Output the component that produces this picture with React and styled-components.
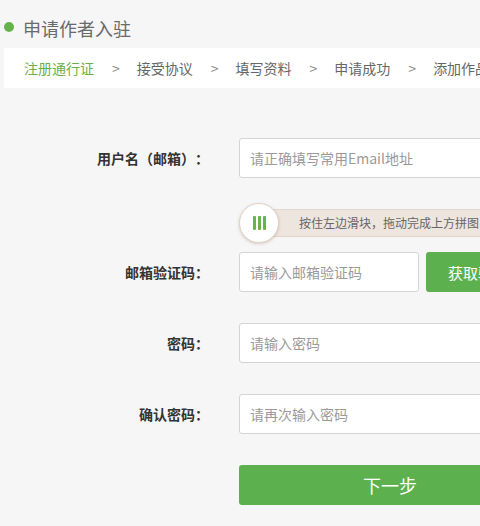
import React from 'react';
import styled, { createGlobalStyle } from 'styled-components';

const GlobalStyle = createGlobalStyle`
  html, body {
    margin: 0;
    padding: 0;
    background: #f6f6f6;
    overflow: hidden;
  }
  body {
    font-family: "Noto Sans CJK SC", "Noto Sans", "Liberation Sans", sans-serif;
    color: #333;
    text-spacing-trim: space-all;
  }
  * { box-sizing: border-box; }
`;

const green = '#5db04e';

const Page = styled.div`
  width: 480px;
  height: 526px;
  overflow: hidden;
  padding-top: 18px;
`;

const Header = styled.h2`
  margin: 0 0 10px 4px;
  display: flex;
  align-items: center;
  gap: 9px;
  height: 20px;
  font-size: 18px;
  line-height: 20px;
  font-weight: normal;
  color: #6a6a6a;
  white-space: nowrap;
`;

const Dot = styled.span`
  width: 10px;
  height: 10px;
  border-radius: 50%;
  background: #67b34b;
  flex-shrink: 0;
  margin-top: -2px;
`;

const Steps = styled.div`
  margin-left: 4px;
  width: 600px;
  height: 40px;
  background: #fff;
  display: flex;
  align-items: center;
  padding-left: 20px;
  font-size: 14px;
  white-space: nowrap;
`;

const Step = styled.span`
  color: ${({ $active }) => ($active ? '#6aaf4c' : '#666')};
`;

const Sep = styled.span`
  color: #888;
  margin: 0 17px 0 18px;
`;

const Form = styled.div`
  margin-top: 50px;
  display: flex;
  flex-direction: column;
`;

const Row = styled.div`
  display: flex;
  align-items: center;
  margin-bottom: ${({ $gap }) => $gap}px;
`;

const Label = styled.label`
  width: 209px;
  flex-shrink: 0;
  margin-right: 30px;
  text-align: right;
  font-size: 14px;
  line-height: 40px;
  font-weight: bold;
  color: #333;
  white-space: nowrap;
  text-spacing-trim: space-all;
`;

const Input = styled.input`
  width: ${({ $w }) => $w || 300}px;
  height: 40px;
  flex-shrink: 0;
  border: 1px solid #d4d4d4;
  border-radius: 3px;
  background: #fff;
  padding: 0 10px;
  font-family: inherit;
  font-size: 14px;
  color: #333;
  outline: none;

  &::placeholder { color: #9a9a9a; }
`;

const CodeButton = styled.button`
  margin-left: 7px;
  width: 120px;
  height: 40px;
  flex-shrink: 0;
  border: none;
  border-radius: 3px;
  background: ${green};
  color: #fff;
  font-family: inherit;
  font-size: 15px;
  text-align: left;
  padding-left: 22px;
  white-space: nowrap;
`;

const Slider = styled.div`
  position: relative;
  margin-left: 240px;
  width: 300px;
  height: 28px;
  flex-shrink: 0;
  background: #eee5de;
  border: 1px solid #e2d6cc;
  border-radius: 14px 0 0 14px;
  padding-left: 58px;
  font-size: 12px;
  line-height: 26px;
  color: #666;
  white-space: nowrap;
`;

const Knob = styled.div`
  position: absolute;
  left: -2px;
  top: -7px;
  width: 40px;
  height: 40px;
  border-radius: 50%;
  background: #fff;
  border: 1px solid #e0d3c8;
  box-shadow: 0 1px 3px rgba(150, 120, 90, 0.35);
  display: flex;
  align-items: center;
  justify-content: center;
  gap: 2px;
`;

const Bar = styled.span`
  width: 3px;
  height: 14px;
  background: #6cb14f;
  border-radius: 1px;
`;

const SubmitButton = styled.button`
  width: 302px;
  height: 40px;
  flex-shrink: 0;
  border: none;
  border-radius: 3px;
  background: ${green};
  color: #fff;
  font-family: inherit;
  font-size: 18px;
`;

export default function App() {
  return (
    <Page>
      <GlobalStyle />
      <Header><Dot />申请作者入驻</Header>

      <Steps>
        <Step $active>注册通行证</Step>
        <Sep>&gt;</Sep>
        <Step>接受协议</Step>
        <Sep>&gt;</Sep>
        <Step>填写资料</Step>
        <Sep>&gt;</Sep>
        <Step>申请成功</Step>
        <Sep>&gt;</Sep>
        <Step>添加作品</Step>
      </Steps>

      <Form>
        <Row $gap={31}>
          <Label>用户名（邮箱）：</Label>
          <Input placeholder="请正确填写常用Email地址" />
        </Row>

        <Row $gap={15}>
          <Slider>
            <Knob><Bar /><Bar /><Bar /></Knob>
            按住左边滑块，拖动完成上方拼图
          </Slider>
        </Row>

        <Row $gap={31}>
          <Label>邮箱验证码：</Label>
          <Input $w={180} placeholder="请输入邮箱验证码" />
          <CodeButton>获取验证码</CodeButton>
        </Row>

        <Row $gap={31}>
          <Label>密码：</Label>
          <Input type="password" placeholder="请输入密码" />
        </Row>

        <Row $gap={31}>
          <Label>确认密码：</Label>
          <Input type="password" placeholder="请再次输入密码" />
        </Row>

        <Row $gap={0}>
          <Label />
          <SubmitButton>下一步</SubmitButton>
        </Row>
      </Form>
    </Page>
  );
}
